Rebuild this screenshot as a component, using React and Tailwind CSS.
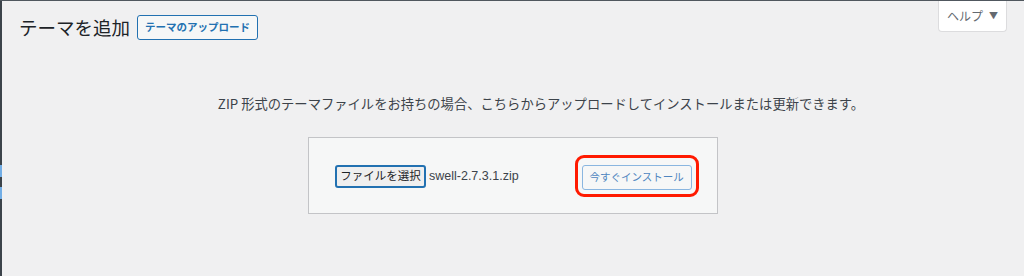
const App = () => {
    const font = { fontFamily: '"Noto Sans CJK JP", "Noto Sans", sans-serif' };

    return (
        <div className="w-[1024px] h-[276px] bg-[#f0f0f1] border-t border-[#50575e] flex overflow-hidden" style={font}>
            <div className="w-[2px] h-full bg-[#3c434a] flex flex-col shrink-0">
                <div className="h-[164px]" />
                <div className="h-[12px] bg-[#72aee6]" />
                <div className="h-[10px]" />
                <div className="h-[12px] bg-[#72aee6]" />
            </div>

            <div className="flex-1 flex flex-col">
                <div className="flex justify-end pr-[17px]">
                    <button className="h-[31px] w-[69px] bg-white border border-t-0 border-[#dcdcde] rounded-b-[4px] text-[12px] text-[#646970] flex items-center justify-center gap-[6px] whitespace-nowrap">
                        <span>ヘルプ</span>
                        <span className="text-[9px] text-[#646970]">▼</span>
                    </button>
                </div>

                <div className="flex items-center gap-[7px] pl-[17px] -mt-[19px]">
                    <h1 className="text-[18.5px] leading-[28px] text-[#1d2327] whitespace-nowrap">テーマを追加</h1>
                    <button className="h-[25px] w-[121px] border border-[#2271b1] rounded-[3px] text-[10.5px] font-bold text-[#2271b1] bg-[#f6f7f7] whitespace-nowrap">
                        テーマのアップロード
                    </button>
                </div>

                <p className="mt-[53px] pl-[56px] text-center text-[13.3px] leading-[20px] text-[#3c434a] whitespace-nowrap">
                    ZIP 形式のテーマファイルをお持ちの場合、こちらからアップロードしてインストールまたは更新できます。
                </p>

                <div className="mt-[23px] ml-[306px] w-[410px] h-[77px] bg-[#f6f7f7] border border-[#c3c4c7] flex items-center pl-[26px] pt-[1px]">
                    <div className="flex items-center shrink-0">
                        <button className="h-[23px] w-[91px] border-2 border-[#2271b1] rounded-[3px] bg-[#efefef] text-[11.5px] text-[#1d2327] leading-none whitespace-nowrap">
                            ファイルを選択
                        </button>
                        <span className="ml-[3px] text-[12.5px] text-[#3c434a] whitespace-nowrap" style={{ fontFamily: '"Liberation Sans", Arial, sans-serif' }}>swell-2.7.3.1.zip</span>
                    </div>
                    <div className="ml-[56px] shrink-0 border-[3px] border-[#ff1a00] rounded-[9px] px-[4px] py-[4px]">
                        <button className="h-[25px] w-[110px] border border-[#8ab6e0] rounded-[3px] bg-[#f6f7f7] text-[10.5px] text-[#4f86c0] whitespace-nowrap">
                            今すぐインストール
                        </button>
                    </div>
                </div>
            </div>
        </div>
    );
};

export default App;
